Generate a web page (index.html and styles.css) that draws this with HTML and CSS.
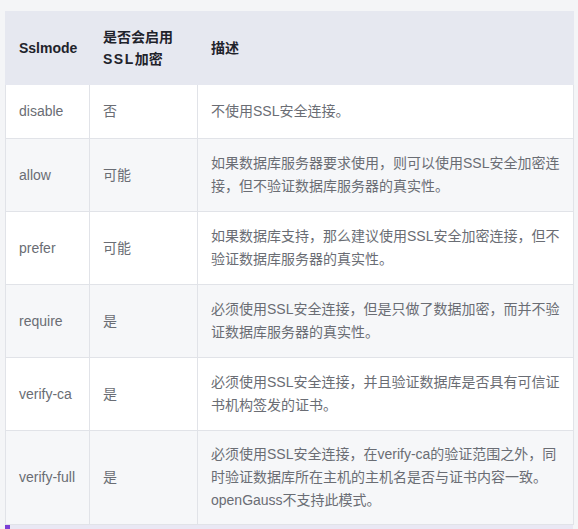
FILE: index.html
```html
<!DOCTYPE html>
<html lang="zh">
<head>
<meta charset="utf-8">
<link rel="stylesheet" href="styles.css">
</head>
<body>
<div class="wrap">
<table class="tbl">
<colgroup><col class="c1"><col class="c2"><col class="c3"></colgroup>
<thead>
<tr class="head"><th>Sslmode</th><th>是否会启用<br><span class="sp">SSL</span>加密</th><th>描述</th></tr>
</thead>
<tbody>
<tr class="r1"><td>disable</td><td>否</td><td>不使用SSL安全连接。</td></tr>
<tr class="r2 alt"><td>allow</td><td>可能</td><td>如果数据库服务器要求使用，则可以使用SSL安全加密连接，但不验证数据库服务器的真实性。</td></tr>
<tr class="r2"><td>prefer</td><td>可能</td><td>如果数据库支持，那么建议使用SSL安全加密连接，但不验证数据库服务器的真实性。</td></tr>
<tr class="r2 alt"><td>require</td><td>是</td><td>必须使用SSL安全连接，但是只做了数据加密，而并不验证数据库服务器的真实性。</td></tr>
<tr class="r2"><td>verify-ca</td><td>是</td><td>必须使用SSL安全连接，并且验证数据库是否具有可信证书机构签发的证书。</td></tr>
<tr class="r3 alt"><td>verify-full</td><td>是</td><td>必须使用SSL安全连接，在verify-ca的验证范围之外，同时验证数据库所在主机的主机名是否与证书内容一致。openGauss不支持此模式。</td></tr>
</tbody>
</table>
<div class="strip"><span class="mark"></span></div>
</div>
</body>
</html>
```
FILE: styles.css
```css
html, body {
  margin: 0;
  padding: 0;
  background: #f4f5f7;
}
body {
  font-family: "Liberation Sans", "Noto Sans CJK SC", sans-serif;
  font-size: 14px;
  color: #6a6d74;
}
.wrap {
  padding: 11px 5px 0 5px;
}
.tbl {
  width: 568px;
  border-collapse: collapse;
  table-layout: fixed;
  background: #ffffff;
}
.c1 { width: 84px; }
.c2 { width: 108px; }
.c3 { width: 376px; }
.tbl th, .tbl td {
  border: 1px solid #e1e3e8;
  text-align: left;
  vertical-align: middle;
  padding: 0 12px 0 13px;
  line-height: 23px;
}
.tbl th {
  background: #e6e8f0;
  color: #1f232b;
  font-weight: bold;
  font-size: 14px;
  height: 72px;
  line-height: 22px;
  border-color: #e6e8f0;
}
.sp { letter-spacing: 1.5px; }
.tbl tbody tr.alt td { background: #f6f7f9; }
.r1 td { height: 53px; }
.r2 td { height: 72px; }
.r3 td { height: 93px; }
.strip {
  height: 4px;
  background: #e9e8f4;
  position: relative;
}
.mark {
  position: absolute;
  left: 0;
  top: 0;
  width: 5px;
  height: 4px;
  background: #7b3fd6;
}
```
